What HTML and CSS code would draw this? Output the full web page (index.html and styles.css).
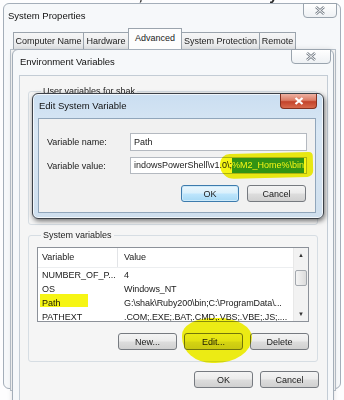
FILE: index.html
```html
<!DOCTYPE html>
<html>
<head>
    <title>Edit System Variable</title>
    <link rel="stylesheet" href="styles.css">
</head>
<body>

<div class="page-caption">Variables window, edit the Path entry</div>

<!-- back window -->
<div class="window sys-window">
    <div class="titlebar">System Properties</div>
    <div class="close-btn sys-close">
        <svg width="10" height="9" viewBox="0 0 10 9"><path d="M1 1 L9 8 M9 1 L1 8" stroke="#7d858e" stroke-width="2.6" fill="none"/><path d="M1 1 L9 8 M9 1 L1 8" stroke="#fff" stroke-width="1" fill="none"/></svg>
    </div>
    <div class="tabs">
        <div class="tab tab-computer">Computer Name</div>
        <div class="tab tab-hardware">Hardware</div>
        <div class="tab tab-advanced active">Advanced</div>
        <div class="tab tab-protection">System Protection</div>
        <div class="tab tab-remote">Remote</div>
    </div>
    <div class="sys-client"></div>
</div>

<!-- environment variables -->
<div class="window env-window">
    <div class="titlebar">Environment Variables</div>
    <div class="close-btn env-close">
        <svg width="10" height="9" viewBox="0 0 10 9"><path d="M1 1 L9 8 M9 1 L1 8" stroke="#7d858e" stroke-width="2.6" fill="none"/><path d="M1 1 L9 8 M9 1 L1 8" stroke="#fff" stroke-width="1" fill="none"/></svg>
    </div>
    <div class="env-client">
        <fieldset class="group user-group">
            <legend>User variables for shak</legend>
        </fieldset>
        <fieldset class="group system-group">
            <legend>System variables</legend>
            <div class="listbox">
                <div class="list-body">
                    <div class="list-row list-head">
                        <span class="col-var">Variable</span>
                        <span class="col-val">Value</span>
                    </div>
                    <div class="list-row">
                        <span class="col-var">NUMBER_OF_P...</span>
                        <span class="col-val">4</span>
                    </div>
                    <div class="list-row">
                        <span class="col-var">OS</span>
                        <span class="col-val">Windows_NT</span>
                    </div>
                    <div class="list-row">
                        <span class="col-var">Path</span>
                        <span class="col-val">G:\shak\Ruby200\bin;C:\ProgramData\...</span>
                    </div>
                    <div class="list-row">
                        <span class="col-var">PATHEXT</span>
                        <span class="col-val">.COM;.EXE;.BAT;.CMD;.VBS;.VBE;.JS;....</span>
                    </div>
                </div>
                <div class="scrollbar">
                    <div class="scroll-arrow">&#9650;</div>
                    <div class="scroll-track"><div class="scroll-thumb"></div></div>
                    <div class="scroll-arrow">&#9660;</div>
                </div>
            </div>
            <div class="btn-row">
                <button class="button">New...</button>
                <button class="button">Edit...</button>
                <button class="button">Delete</button>
            </div>
        </fieldset>
        <div class="btn-row env-buttons">
            <button class="button">OK</button>
            <button class="button">Cancel</button>
        </div>
    </div>
</div>

<!-- front dialog -->
<div class="edit-dialog">
    <div class="titlebar">Edit System Variable</div>
    <div class="red-close">
        <svg width="10" height="8" viewBox="0 0 10 8"><path d="M1.5 1 L8.5 7 M8.5 1 L1.5 7" stroke="#fff" stroke-width="2.2" fill="none"/></svg>
    </div>
    <div class="dialog-client">
        <div class="field-row">
            <label class="field-label">Variable name:</label>
            <div class="textbox">Path</div>
        </div>
        <div class="field-row">
            <label class="field-label">Variable value:</label>
            <div class="textbox value-box"><span>indowsPowerShell\v1.0\;</span><span class="selected">%M2_Home%\bin</span></div>
        </div>
        <div class="btn-row dialog-buttons">
            <button class="button focused">OK</button>
            <button class="button">Cancel</button>
        </div>
    </div>
</div>

<!-- highlighter marks -->
<div class="marker marker-value"></div>
<div class="marker marker-path"></div>
<div class="marker marker-edit"></div>

</body>
</html>
```

FILE: styles.css
```css
body {
    margin: 0;
    width: 344px;
    height: 400px;
    overflow: hidden;
    position: relative;
    background-color: #fdfdfe;
    font-family: "Liberation Sans", Arial, sans-serif;
    font-size: 9px;
    color: #1a1a1a;
}

.page-caption {
    position: absolute;
    top: -14px;
    left: 14px;
    font-size: 15px;
    font-weight: bold;
    color: #2a2a2a;
    white-space: nowrap;
    filter: blur(0.4px);
}

.window {
    position: absolute;
    box-sizing: border-box;
    border: 1px solid #a4aeb9;
    border-radius: 6px 6px 0 0;
    background-color: #f6f8fa;
}

.titlebar {
    padding-left: 4px;
    height: 24px;
    line-height: 20px;
    padding-top: 2px;
    box-sizing: border-box;
    font-size: 9.5px;
    color: #111;
}

.close-btn {
    position: absolute;
    top: -1px;
    height: 15px;
    box-sizing: border-box;
    border: 1px solid #9aa4ae;
    border-radius: 0 0 4px 4px;
    background: linear-gradient(#ffffff, #eef1f4);
    display: flex;
    align-items: center;
    justify-content: center;
}

/* system properties */
.sys-window {
    left: 3px;
    top: 3px;
    width: 338px;
    height: 386px;
    border-radius: 6px;
}

.sys-close {
    right: 3px;
    width: 34px;
}

.tabs {
    display: flex;
    align-items: flex-end;
    height: 21px;
    padding-left: 9px;
}

.tab {
    box-sizing: border-box;
    height: 17px;
    border: 1px solid #9ba4ad;
    border-bottom: none;
    margin-right: -1px;
    background: linear-gradient(#f6f6f6, #e4e6e8);
    text-align: center;
    line-height: 16px;
    color: #222;
}

.tab.active {
    height: 21px;
    background: #fdfdfd;
    line-height: 18px;
    position: relative;
    z-index: 1;
}

.tab-computer { width: 71px; }
.tab-hardware { width: 46px; }
.tab-advanced { width: 54px; }
.tab-protection { width: 79px; }
.tab-remote { width: 37px; }

.sys-client {
    margin: 0 4px 0 6px;
    height: 340px;
    border: 1px solid #b8c1ca;
    background-color: #f9f9f9;
}

/* environment variables */
.env-window {
    left: 12px;
    top: 49px;
    width: 322px;
    height: 360px;
    box-shadow: 0 0 5px rgba(0, 0, 0, 0.12);
}

.env-window .titlebar {
    padding-left: 7px;
}

.env-close {
    right: 2px;
    width: 40px;
}

.env-client {
    margin: 1px 5px 0 6px;
    height: 340px;
    box-sizing: border-box;
    border: 1px solid #c3ccd5;
    background-color: #f5f5f5;
    padding: 10px 8px 0 8px;
}

.group {
    margin: 0;
    border: 1px solid #d6dde3;
    border-radius: 3px;
    padding: 0 8px;
}

.group legend {
    padding: 0 2px;
    margin-left: 4px;
    color: #222;
}

.user-group {
    height: 137px;
    margin-right: 1px;
}

.system-group {
    margin-top: 5px;
    padding-top: 7px;
    padding-bottom: 11px;
    margin-right: 1px;
}

.listbox {
    display: flex;
    height: 75px;
    box-sizing: border-box;
    border: 1px solid #8c9199;
    background-color: #fff;
    overflow: hidden;
}

.list-body {
    flex: 1;
}

.list-row {
    display: flex;
    height: 14px;
    line-height: 14px;
    white-space: nowrap;
}

.list-row.list-head {
    height: 19px;
    line-height: 19px;
    border-bottom: 1px solid #eceef0;
}

.col-var {
    width: 80px;
    padding-left: 4px;
    box-sizing: border-box;
}

.list-head .col-var {
    border-right: 1px solid #e2e4e7;
}

.col-val {
    padding-left: 6px;
    letter-spacing: -0.1px;
}

.scrollbar {
    width: 14px;
    display: flex;
    flex-direction: column;
    background-color: #f2f2f2;
    border-left: 1px solid #e8e8e8;
}

.scroll-arrow {
    height: 14px;
    font-size: 6px;
    line-height: 14px;
    text-align: center;
    color: #333;
}

.scroll-track {
    flex: 1;
    padding-top: 8px;
}

.scroll-thumb {
    margin: 0 1px;
    height: 14px;
    border: 1px solid #a3a8ae;
    border-radius: 2px;
    background: linear-gradient(90deg, #f4f4f4, #dcdcdc);
}

.btn-row {
    display: flex;
    justify-content: flex-end;
    gap: 7px;
    margin-top: 11px;
}

.button {
    width: 59px;
    height: 17px;
    padding: 0;
    box-sizing: border-box;
    border: 1px solid #767a80;
    border-radius: 3px;
    background: linear-gradient(#f4f4f4 0%, #ebebeb 48%, #dddddd 52%, #d0d0d0 100%);
    font-family: inherit;
    font-size: 9px;
    color: #1a1a1a;
}

.env-buttons {
    margin-top: 9px;
}

/* edit dialog */
.edit-dialog {
    position: absolute;
    left: 32px;
    top: 93px;
    width: 292px;
    height: 126px;
    box-sizing: border-box;
    border: 1px solid #3c4148;
    border-radius: 6px;
    background: linear-gradient(#cadef1, #d9e7f4 30%, #cfdfee);
    box-shadow: 1px 2px 5px rgba(0, 0, 0, 0.55), inset 0 0 0 1px rgba(255, 255, 255, 0.7);
}

.edit-dialog .titlebar {
    padding-left: 6px;
    height: 24px;
}

.red-close {
    position: absolute;
    top: 0;
    right: 6px;
    width: 37px;
    height: 15px;
    box-sizing: border-box;
    border: 1px solid #83301f;
    border-top: none;
    border-radius: 0 0 4px 4px;
    background: linear-gradient(#eeb1a2 0%, #dc7d66 45%, #c3432a 55%, #d8694c 100%);
    display: flex;
    align-items: center;
    justify-content: center;
}

.dialog-client {
    margin: 0 7px 0 5px;
    height: 95px;
    box-sizing: border-box;
    border: 1px solid #91a6bb;
    background-color: #f1f1f1;
    padding: 14px 8px 0 8px;
}

.field-row {
    display: flex;
    align-items: center;
    margin-bottom: 6px;
}

.field-label {
    width: 83px;
}

.textbox {
    width: 177px;
    height: 18px;
    box-sizing: border-box;
    border: 1px solid #b4b9c0;
    background-color: #fff;
    padding-left: 3px;
    line-height: 16px;
    white-space: nowrap;
    overflow: hidden;
}

.value-box {
    height: 17px;
    line-height: 15px;
    display: flex;
    justify-content: flex-end;
    padding: 0 2px 0 0;
}

.value-box span {
    flex-shrink: 0;
}

.selected {
    background-color: #3399ff;
    color: #fff;
}

.dialog-buttons {
    margin-top: 11px;
    margin-right: 1px;
    gap: 8px;
}

.dialog-buttons .button:first-child {
    width: 58px;
}

.button.focused {
    border-color: #3d7bad;
    background: linear-gradient(#eaf6fd 0%, #d9f0fc 48%, #bee6fd 52%, #a7d9f5 100%);
    box-shadow: inset 0 0 0 1px #cdeafa;
}

/* highlighter marks */
.marker {
    position: absolute;
    background-color: #f6f514;
    mix-blend-mode: multiply;
}

.marker-value {
    left: 220px;
    top: 153px;
    width: 93px;
    height: 25px;
    border-radius: 10px 4px 6px 14px;
    transform: rotate(-1.5deg);
}

.marker-path {
    left: 40px;
    top: 294px;
    width: 48px;
    height: 13px;
}

.marker-edit {
    left: 182px;
    top: 318px;
    width: 70px;
    height: 45px;
    border-radius: 45% 50% 55% 45% / 40% 45% 60% 60%;
}
```
